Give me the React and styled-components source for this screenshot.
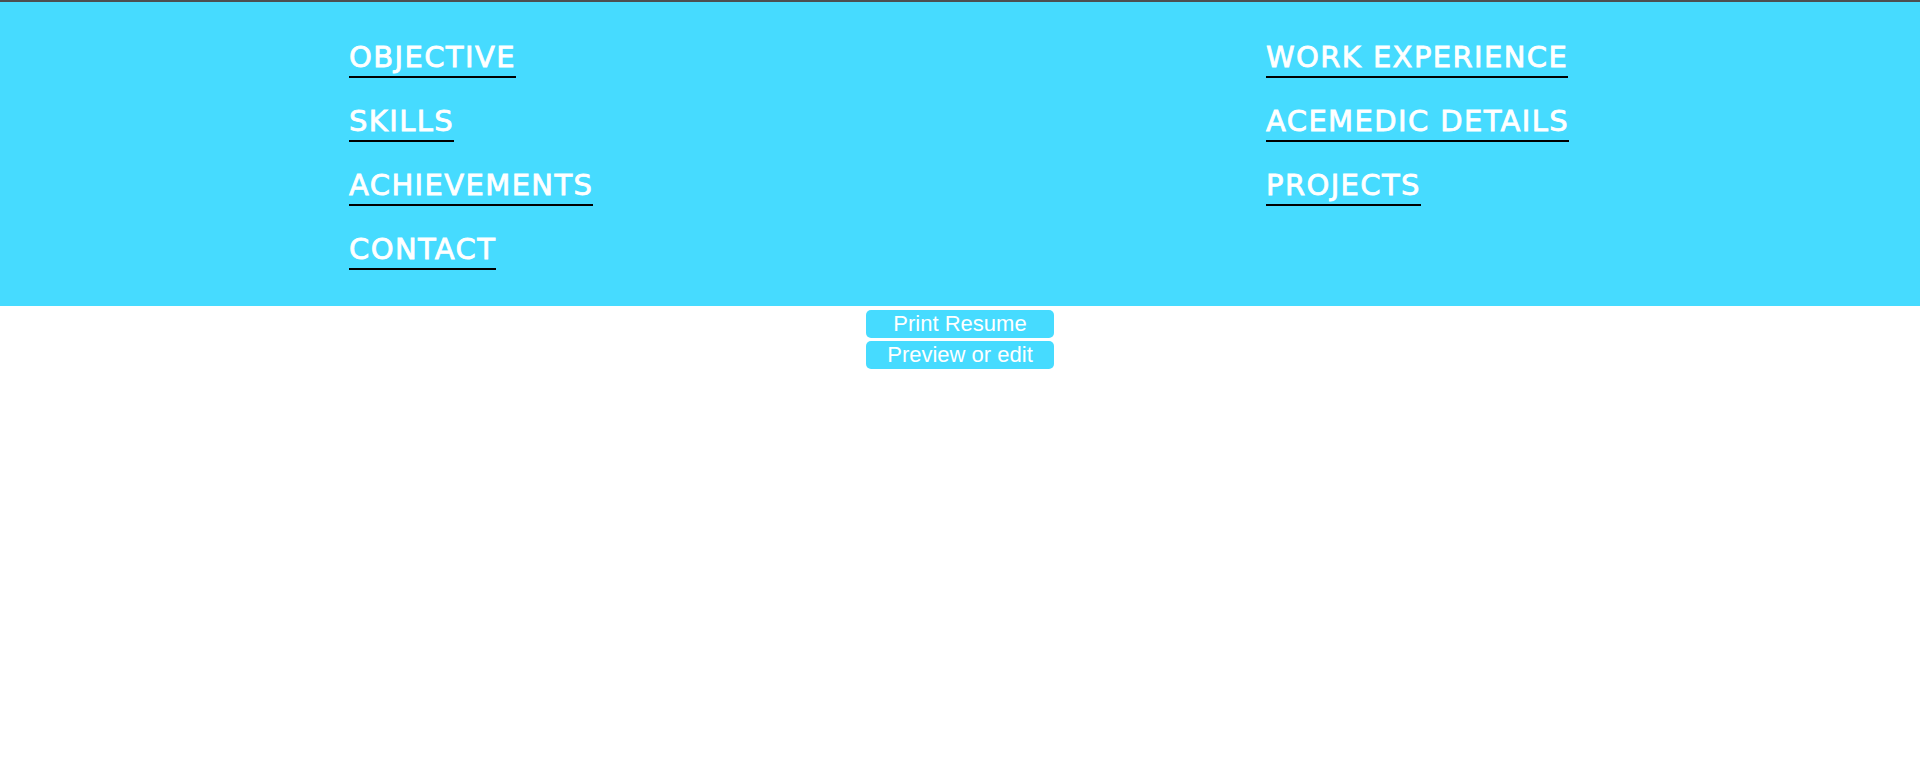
import styled, { createGlobalStyle } from "styled-components";

const GlobalStyle = createGlobalStyle`
  body {
    margin: 0;
    background: #fff;
    font-family: "Liberation Sans", Arial, sans-serif;
  }
`;

const TopBar = styled.div`
  height: 2px;
  background: #4d4f51;
`;

const Header = styled.header`
  background: #46dbff;
  height: 304px;
  box-sizing: border-box;
  padding: 38px 0 0 349px;
  display: grid;
  grid-template-columns: 917px auto;
  align-items: start;
`;

const LinkList = styled.ul`
  list-style: none;
  margin: 0;
  padding: 0;
`;

const LinkItem = styled.li`
  height: 64px;
`;

const NavLink = styled.a`
  display: inline-block;
  color: #fff;
  text-decoration: none;
  font-family: "DejaVu Sans", "Inter", sans-serif;
  font-weight: 400;
  font-size: 29px;
  line-height: 34px;
  letter-spacing: 1.4px;
  padding-bottom: 2px;
  border-bottom: 2px solid #000;
  cursor: pointer;
  -webkit-text-stroke: 0.8px #fff;
`;

const Actions = styled.div`
  display: flex;
  flex-direction: column;
  align-items: center;
  gap: 3px;
  padding-top: 4px;
`;

const ActionButton = styled.button`
  width: 188px;
  height: 28px;
  border: none;
  border-radius: 5px;
  background: #46dbff;
  color: #fff;
  font-family: "Liberation Sans", Arial, sans-serif;
  font-size: 22px;
  line-height: 28px;
  padding: 0;
  cursor: pointer;
`;

const leftLinks = ["OBJECTIVE", "SKILLS", "ACHIEVEMENTS", "CONTACT"];
const rightLinks = ["WORK EXPERIENCE", "ACEMEDIC DETAILS", "PROJECTS"];

function App() {
  return (
    <>
      <GlobalStyle />
      <TopBar />
      <Header>
        <LinkList>
          {leftLinks.map((l) => (
            <LinkItem key={l}>
              <NavLink>{l}</NavLink>
            </LinkItem>
          ))}
        </LinkList>
        <LinkList>
          {rightLinks.map((l) => (
            <LinkItem key={l}>
              <NavLink>{l}</NavLink>
            </LinkItem>
          ))}
        </LinkList>
      </Header>
      <Actions>
        <ActionButton>Print Resume</ActionButton>
        <ActionButton>Preview or edit</ActionButton>
      </Actions>
    </>
  );
}

export default App;
